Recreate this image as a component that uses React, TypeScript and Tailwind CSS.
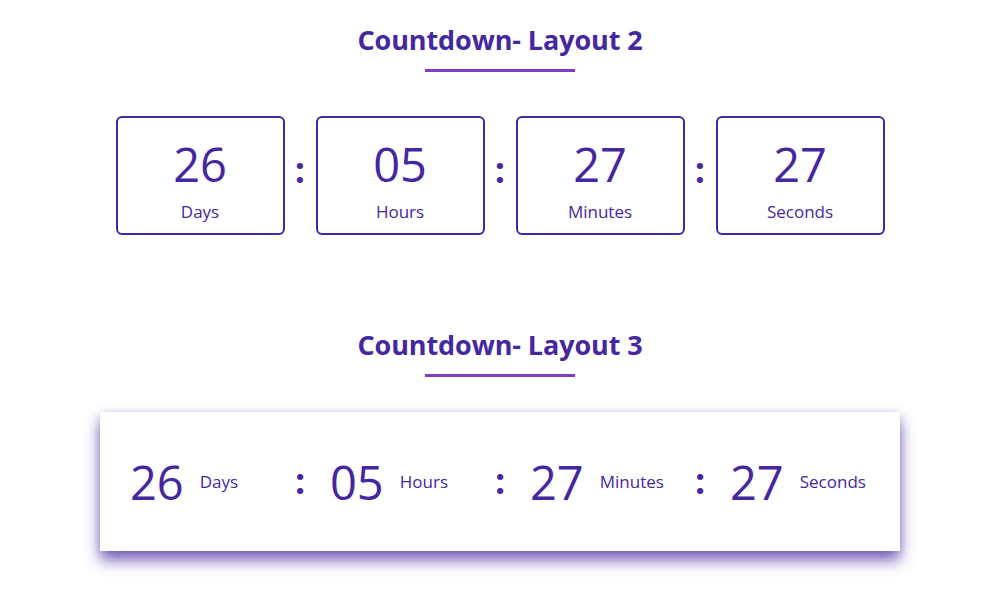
const units = [
  { value: "26", label: "Days" },
  { value: "05", label: "Hours" },
  { value: "27", label: "Minutes" },
  { value: "27", label: "Seconds" },
];

const Heading = ({ title }: { title: string }) => (
  <div className="flex flex-col items-center">
    <h2 className="text-[27px] font-bold leading-[34px] text-[#4527a0] tracking-[-0.1px]">{title}</h2>
    <span className="mt-[12px] h-[3px] w-[150px] bg-[#7e3fc5]" />
  </div>
);

const Colon = ({ className }: { className: string }) => (
  <span className={`flex items-center justify-center text-[36px] font-bold leading-none text-[#4527a0] ${className}`}>:</span>
);

export default function App() {
  return (
    <div className="w-[1000px] h-[600px] bg-white font-['Open_Sans',sans-serif] overflow-hidden">
      {/* ── layout 2 ── */}
      <div className="pt-[23px]">
        <Heading title="Countdown- Layout 2" />
        <div className="mt-[44px] flex justify-center">
          {units.map((u, i) => (
            <div key={i} className="flex">
              {i > 0 && <Colon className="w-[31px] pb-[12px]" />}
              <div className="flex h-[119px] w-[169px] flex-col items-center rounded-[6px] border-2 border-[#4527a0] pt-[18px]">
                <span className="text-[47px] leading-[56px] text-[#4527a0]">{u.value}</span>
                <span className="mt-[10px] text-[17px] leading-[20px] text-[#4527a0]">{u.label}</span>
              </div>
            </div>
          ))}
        </div>
      </div>

      {/* ── layout 3 ── */}
      <div className="pt-[93px]">
        <Heading title="Countdown- Layout 3" />
        <div className="mx-auto mt-[35px] flex h-[139px] w-[800px] items-center bg-white shadow-[0_0_6px_rgba(69,39,160,0.12),0_9px_14px_rgba(69,39,160,0.75)]">
          {units.map((u, i) => (
            <div key={i} className="flex items-center">
              {i > 0 && <Colon className="w-[6px] pb-[2px]" />}
              <div className={`flex items-center ${i === 0 ? "w-[197px] pl-[30px]" : "w-[194px] pl-[27px]"}`}>
                <span className="text-[47px] leading-[56px] text-[#4527a0]">{u.value}</span>
                <span className="ml-[16px] text-[17px] leading-[20px] text-[#4527a0]">{u.label}</span>
              </div>
            </div>
          ))}
        </div>
      </div>
    </div>
  );
}
